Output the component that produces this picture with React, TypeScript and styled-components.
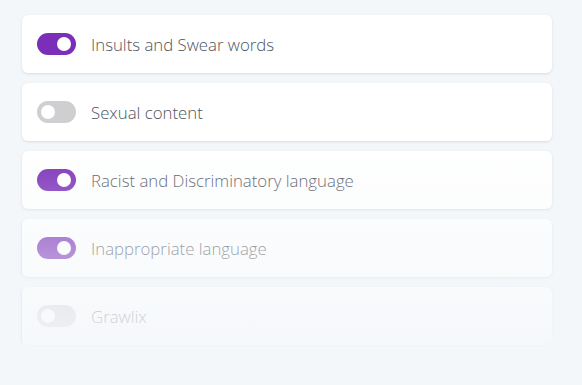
import { useState } from "react";
import styled, { createGlobalStyle } from "styled-components";

const GlobalStyle = createGlobalStyle`
    html, body {
        margin: 0;
        padding: 0;
        background: #f4f7fa;
        font-family: "Open Sans", "Noto Sans", sans-serif;
    }
`;

const Page = styled.div`
    padding: 15px 0 0 22px;
`;

/* list with the fade-out at the bottom */
const FilterList = styled.ul`
    position: relative;
    list-style: none;
    margin: 0;
    padding: 0 20px 10px 0;
    width: 530px;
    display: flex;
    flex-direction: column;
    gap: 10px;

    &::after {
        content: "";
        position: absolute;
        inset: 0;
        pointer-events: none;
        background: linear-gradient(
            to bottom,
            rgba(244, 247, 250, 0) 38%,
            rgba(244, 247, 250, 0.92) 100%
        );
    }
`;

const FilterCard = styled.li`
    height: 58px;
    box-sizing: border-box;
    background: #ffffff;
    border-radius: 6px;
    box-shadow: 0 1px 3px rgba(30, 40, 60, 0.13);
    display: flex;
    align-items: center;
    gap: 15px;
    padding: 0 15px;
    cursor: pointer;
`;

const Switch = styled.span<{ $on: boolean }>`
    position: relative;
    flex: none;
    width: 39px;
    height: 22px;
    border-radius: 11px;
    background: ${(p) => (p.$on ? "#7b2fb8" : "#cfcfd1")};
    transition: background 0.2s ease;

    &::before {
        content: "";
        position: absolute;
        top: 4px;
        left: ${(p) => (p.$on ? "20px" : "4px")};
        width: 14px;
        height: 14px;
        border-radius: 50%;
        background: #ffffff;
        transition: left 0.2s ease;
    }
`;

const Label = styled.span`
    font-size: 16.8px;
    font-weight: 300;
    color: #4f5560;
    padding-top: 1px;
`;

const initial = [
    { name: "Insults and Swear words", on: true },
    { name: "Sexual content", on: false },
    { name: "Racist and Discriminatory language", on: true },
    { name: "Inappropriate language", on: true },
    { name: "Grawlix", on: false },
];

export default function App() {
    const [filters, setFilters] = useState(initial);

    function toggle(i: number) {
        setFilters(filters.map((f, j) => (j === i ? { ...f, on: !f.on } : f)));
    }

    return (
        <>
            <GlobalStyle />
            <Page>
                <FilterList>
                    {filters.map((f, i) => (
                        <FilterCard key={f.name} onClick={() => toggle(i)}>
                            <Switch $on={f.on} />
                            <Label>{f.name}</Label>
                        </FilterCard>
                    ))}
                </FilterList>
            </Page>
        </>
    );
}
